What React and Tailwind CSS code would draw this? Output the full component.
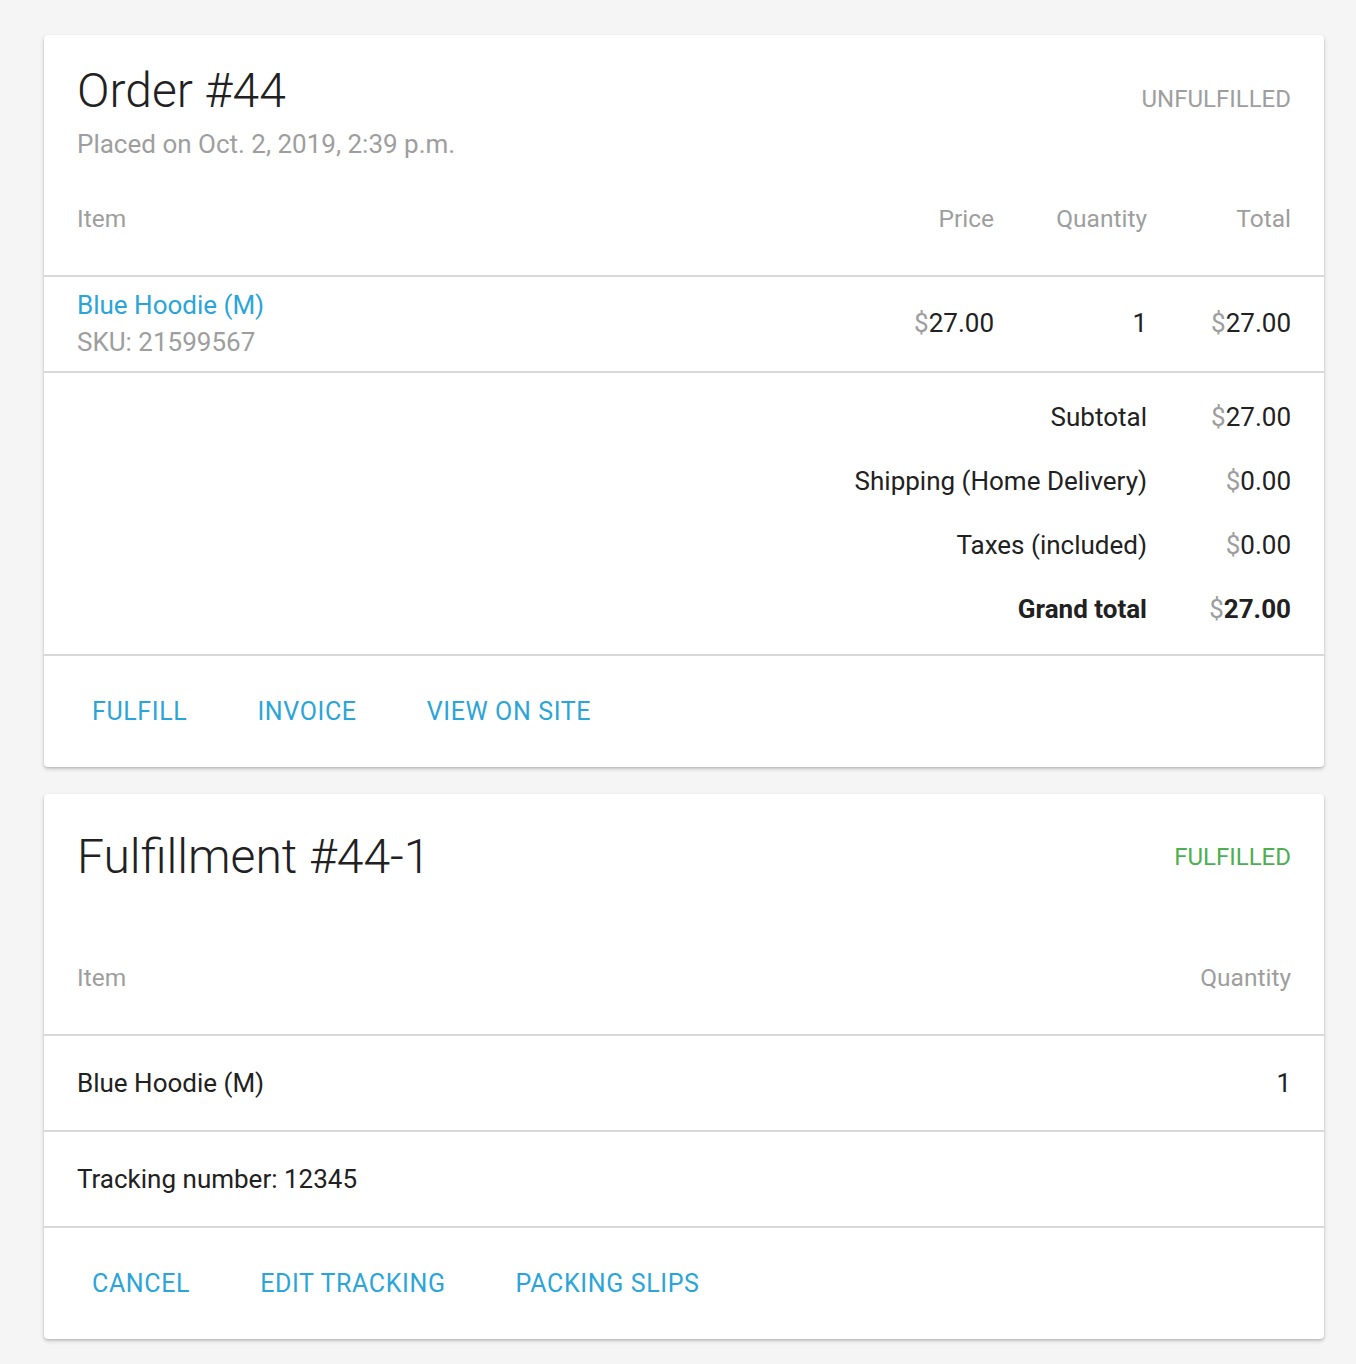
import { useState } from 'react'

const order = {
  number: '44',
  placed: 'Oct. 2, 2019, 2:39 p.m.',
  status: 'Unfulfilled',
  lines: [{ name: 'Blue Hoodie (M)', sku: '21599567', price: '27.00', quantity: 1, total: '27.00' }],
  totals: [
    { label: 'Subtotal', value: '27.00' },
    { label: 'Shipping (Home Delivery)', value: '0.00' },
    { label: 'Taxes (included)', value: '0.00' },
    { label: 'Grand total', value: '27.00', strong: true },
  ],
}

const fulfillment = {
  number: '44-1',
  status: 'Fulfilled',
  lines: [{ name: 'Blue Hoodie (M)', quantity: 1 }],
  tracking: '12345',
}

function Money({ value }) {
  return (
    <span>
      <span className="text-[#9e9e9e] font-normal">$</span>
      {value}
    </span>
  )
}

function Card({ children, className = '' }) {
  return (
    <div
      className={
        'w-[1280px] bg-white rounded-[4px] shadow-[0_2px_4px_rgba(0,0,0,0.18),0_1px_2px_rgba(0,0,0,0.12)] ' + className
      }
    >
      {children}
    </div>
  )
}

function CardTitle({ title, subtitle, status, statusClass, statusOffset, top }) {
  return (
    <div className={'flex justify-between items-start px-[33px] ' + top}>
      <div>
        <h2 className="text-[48px] leading-[59px] font-light text-[#212121]">{title}</h2>
        {subtitle && <p className="text-[26px] leading-[42px] text-[#9e9e9e] mt-[3px]">{subtitle}</p>}
      </div>
      <span className={'text-[24px] leading-[36px] uppercase ' + statusClass + ' ' + statusOffset}>{status}</span>
    </div>
  )
}

function Actions({ items }) {
  const [pressed, setPressed] = useState(null)
  return (
    <div className="h-[111px] flex items-center pl-[20px] gap-[14px]">
      {items.map(label => (
        <button
          key={label}
          onClick={() => setPressed(label)}
          className={
            'px-[28px] py-[10px] rounded-[4px] text-[25px] leading-[36px] font-normal uppercase tracking-[0.025em] text-[#2ba5d9] hover:bg-[#2ba5d9]/10 ' +
            (pressed === label ? 'bg-[#2ba5d9]/10' : '')
          }
        >
          {label}
        </button>
      ))}
    </div>
  )
}

export default function App() {
  return (
    <div className="min-h-screen bg-[#f5f5f5] pt-[35px] pb-[24px] pl-[44px] font-['Roboto',sans-serif] text-[#212121]">
      <Card>
        <CardTitle
          title={`Order #${order.number}`}
          subtitle={`Placed on ${order.placed}`}
          status={order.status}
          statusClass="text-[#9e9e9e]"
          statusOffset="mt-[20px]"
          top="pt-[26px]"
        />

        <div className="grid grid-cols-[1fr_200px_153px_144px] px-[33px] pt-[36px] pb-[38px] text-[24.5px] leading-[36px] text-[#9e9e9e] border-b-2 border-[#d8d8d8]">
          <span>Item</span>
          <span className="text-right">Price</span>
          <span className="text-right">Quantity</span>
          <span className="text-right">Total</span>
        </div>

        {order.lines.map(line => (
          <div
            key={line.sku}
            className="grid grid-cols-[1fr_200px_153px_144px] items-center h-[96px] px-[33px] text-[26px] leading-[37.5px] border-b-2 border-[#d8d8d8]"
          >
            <div>
              <a href="#" className="block text-[#2ba5d9]">{line.name}</a>
              <span className="block text-[#9e9e9e]">SKU: {line.sku}</span>
            </div>
            <span className="text-right"><Money value={line.price} /></span>
            <span className="text-right">{line.quantity}</span>
            <span className="text-right"><Money value={line.total} /></span>
          </div>
        ))}

        <div className="px-[33px] pt-[12px] pb-[13px] border-b-2 border-[#d8d8d8]">
          {order.totals.map(row => (
            <div
              key={row.label}
              className={
                'grid grid-cols-[1fr_144px] text-[26px] leading-[64px] ' + (row.strong ? 'font-bold' : '')
              }
            >
              <span className="text-right">{row.label}</span>
              <span className="text-right"><Money value={row.value} /></span>
            </div>
          ))}
        </div>

        <Actions items={['Fulfill', 'Invoice', 'View on site']} />
      </Card>

      <Card className="mt-[27px]">
        <CardTitle
          title={`Fulfillment #${fulfillment.number}`}
          status={fulfillment.status}
          statusClass="text-[#4caf50]"
          statusOffset="mt-[12px]"
          top="pt-[33px]"
        />

        <div className="flex justify-between px-[33px] pt-[74px] pb-[38px] text-[24.5px] leading-[36px] text-[#9e9e9e] border-b-2 border-[#d8d8d8]">
          <span>Item</span>
          <span>Quantity</span>
        </div>

        {fulfillment.lines.map(line => (
          <div
            key={line.name}
            className="flex justify-between items-center h-[96px] px-[33px] text-[26px] border-b-2 border-[#d8d8d8]"
          >
            <span>{line.name}</span>
            <span>{line.quantity}</span>
          </div>
        ))}

        <div className="flex items-center h-[96px] px-[33px] text-[26px] border-b-2 border-[#d8d8d8]">
          Tracking number: {fulfillment.tracking}
        </div>

        <Actions items={['Cancel', 'Edit tracking', 'Packing slips']} />
      </Card>
    </div>
  )
}
